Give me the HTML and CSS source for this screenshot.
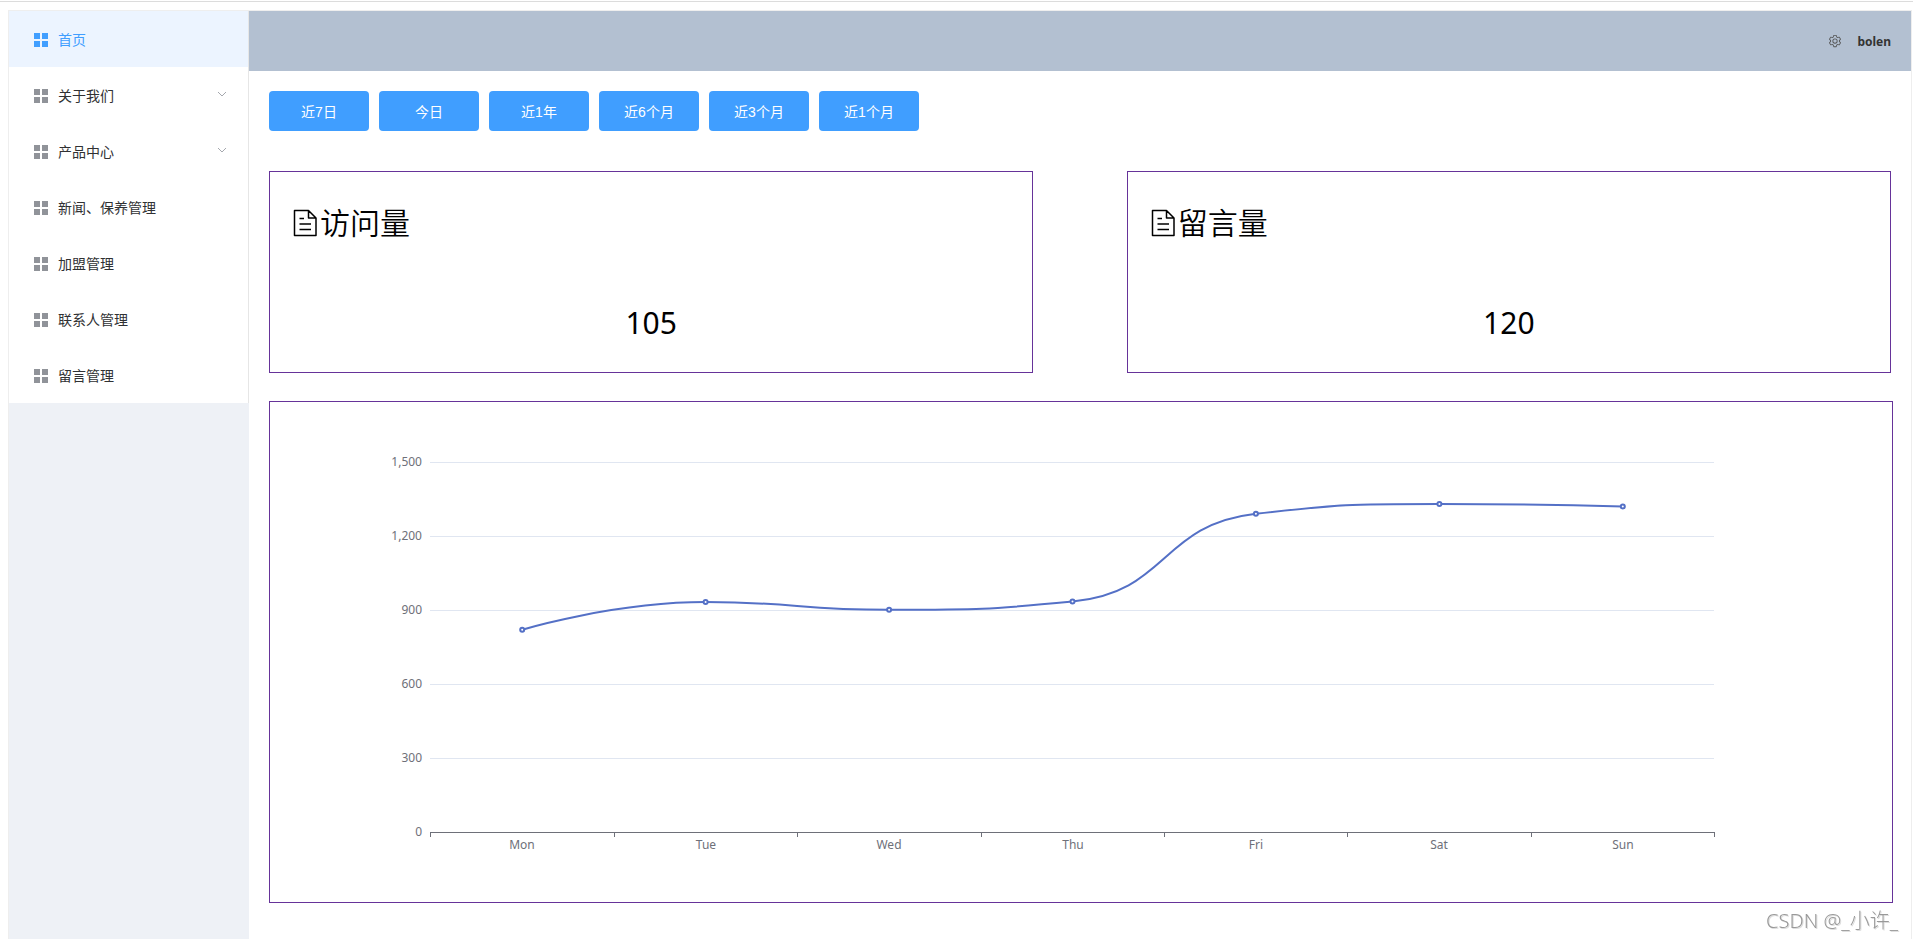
FILE: index.html
```html
<!DOCTYPE html>
<html lang="zh-CN">
<head>
<meta charset="utf-8">
<title>首页</title>
<link rel="stylesheet" href="styles.css">
</head>
<body>
<svg class="sprite" aria-hidden="true">
  <symbol id="icon-menu" viewBox="0 0 14 14"><path d="M0 0h6v6H0zM8 0h6v6H8zM0 8h6v6H0zM8 8h6v6H8z"/></symbol>
  <symbol id="icon-arrow" viewBox="0 0 12 12"><path d="M2 4l4 4 4-4" fill="none" stroke="currentColor"/></symbol>
  <symbol id="icon-document" viewBox="0 0 30 30"><path d="M4.500 2.500H18.500L26 10V27.500H4.500ZM18.500 2.500V10H26M9.500 10.500H14M9.500 16H21M9.500 21.500H21" fill="none" stroke="currentColor" stroke-width="1.500" stroke-linejoin="round"/></symbol>
  <symbol id="icon-setting" viewBox="0 0 1024 1024"><path d="M600.704 64a32 32 0 0 1 30.464 22.208l35.2 109.376c14.784 7.232 28.928 15.36 42.432 24.512l112.384-24.192a32 32 0 0 1 34.432 15.36L944.32 364.8a32 32 0 0 1-4.032 37.504l-77.12 85.12a357.12 357.12 0 0 1 0 49.024l77.12 85.248a32 32 0 0 1 4.032 37.504l-88.704 153.6a32 32 0 0 1-34.432 15.296L708.8 803.904c-13.44 9.088-27.648 17.28-42.368 24.512l-35.264 109.376A32 32 0 0 1 600.704 960H423.296a32 32 0 0 1-30.464-22.208L357.696 828.48a351.616 351.616 0 0 1-42.56-24.64l-112.32 24.256a32 32 0 0 1-34.432-15.36L79.68 659.2a32 32 0 0 1 4.032-37.504l77.12-85.248a357.12 357.12 0 0 1 0-48.896l-77.12-85.248A32 32 0 0 1 79.68 364.8l88.704-153.6a32 32 0 0 1 34.432-15.296l112.32 24.256c13.568-9.152 27.776-17.408 42.56-24.64l35.2-109.312A32 32 0 0 1 423.232 64H600.64zm-23.424 64H446.72l-36.352 113.088-24.512 11.968a294.113 294.113 0 0 0-34.816 20.096l-22.656 15.36-116.224-25.088-65.28 113.152 79.68 88.192-1.92 27.136a293.12 293.12 0 0 0 0 40.192l1.92 27.136-79.808 88.192 65.344 113.152 116.224-25.024 22.656 15.296a294.113 294.113 0 0 0 34.816 20.096l24.512 11.968L446.72 896h130.688l36.48-113.152 24.448-11.904a288.282 288.282 0 0 0 34.752-20.096l22.592-15.296 116.288 25.024 65.28-113.152-79.744-88.192 1.92-27.136a293.12 293.12 0 0 0 0-40.256l-1.92-27.136 79.808-88.128-65.344-113.152-116.288 24.96-22.592-15.232a287.616 287.616 0 0 0-34.752-20.096l-24.448-11.904L577.344 128zM512 320a192 192 0 1 1 0 384 192 192 0 0 1 0-384zm0 64a128 128 0 1 0 0 256 128 128 0 0 0 0-256z"/></symbol>
</svg>
<div class="top-rule"></div>
<div class="container">
  <aside class="aside">
    <nav class="menu">
      <a class="menu-item active" href="#home"><svg class="menu-icon"><use href="#icon-menu"/></svg><span>首页</span></a>
      <button class="menu-item" type="button"><svg class="menu-icon"><use href="#icon-menu"/></svg><span>关于我们</span><svg class="menu-arrow"><use href="#icon-arrow"/></svg></button>
      <button class="menu-item" type="button"><svg class="menu-icon"><use href="#icon-menu"/></svg><span>产品中心</span><svg class="menu-arrow"><use href="#icon-arrow"/></svg></button>
      <a class="menu-item" href="#news"><svg class="menu-icon"><use href="#icon-menu"/></svg><span>新闻、保养管理</span></a>
      <a class="menu-item" href="#join"><svg class="menu-icon"><use href="#icon-menu"/></svg><span>加盟管理</span></a>
      <a class="menu-item" href="#contacts"><svg class="menu-icon"><use href="#icon-menu"/></svg><span>联系人管理</span></a>
      <a class="menu-item" href="#messages"><svg class="menu-icon"><use href="#icon-menu"/></svg><span>留言管理</span></a>
    </nav>
  </aside>
  <div class="content">
    <header class="header">
      <button class="setting" type="button" aria-label="设置"><svg class="setting-icon"><use href="#icon-setting"/></svg></button>
      <span class="user">bolen</span>
    </header>
    <main class="main">
      <div class="ranges">
        <button class="range" type="button">近7日</button>
        <button class="range" type="button">今日</button>
        <button class="range" type="button">近1年</button>
        <button class="range" type="button">近6个月</button>
        <button class="range" type="button">近3个月</button>
        <button class="range" type="button">近1个月</button>
      </div>
      <div class="cards">
        <section class="card">
          <div class="card-title"><svg class="card-icon"><use href="#icon-document"/></svg><span>访问量</span></div>
          <div class="card-value">105</div>
        </section>
        <section class="card">
          <div class="card-title"><svg class="card-icon"><use href="#icon-document"/></svg><span>留言量</span></div>
          <div class="card-value">120</div>
        </section>
      </div>
      <section class="chart-box">
        <svg class="chart" viewBox="0 0 1622 500" role="img" aria-label="Mon - Sun">
          <path class="grid-line" d="M160 60.5H1444M160 134.5H1444M160 208.5H1444M160 282.5H1444M160 356.5H1444"/>
          <path class="axis-line" d="M160 430.5H1445M160.500 430v5M344.500 430v5M527.500 430v5M711.500 430v5M894.500 430v5M1077.500 430v5M1261.500 430v5M1444.500 430v5"/>
          <g class="label label-y">
            <text x="152" y="64">1,500</text>
            <text x="152" y="138">1,200</text>
            <text x="152" y="212">900</text>
            <text x="152" y="286">600</text>
            <text x="152" y="360">300</text>
            <text x="152" y="434">0</text>
          </g>
          <g class="label label-x">
            <text x="252" y="447">Mon</text>
            <text x="436" y="447">Tue</text>
            <text x="619" y="447">Wed</text>
            <text x="803" y="447">Thu</text>
            <text x="986" y="447">Fri</text>
            <text x="1169" y="447">Sat</text>
            <text x="1353" y="447">Sun</text>
          </g>
          <path class="series" d="M252.200 227.700C252.200 227.700 343.500 200.100 435.600 200.100C526.800 200.100 527.400 207.800 619.100 207.800C710.800 207.800 715.500 207.800 802.500 199.600C898.900 190.500 889.500 122.800 985.900 111.800C1073 101.900 1077.700 101.900 1169.400 101.900C1261.100 101.900 1352.800 104.400 1352.800 104.400"/>
          <g class="points">
            <circle cx="252.200" cy="227.700" r="2"/>
            <circle cx="435.600" cy="200.100" r="2"/>
            <circle cx="619.100" cy="207.800" r="2"/>
            <circle cx="802.500" cy="199.600" r="2"/>
            <circle cx="985.900" cy="111.800" r="2"/>
            <circle cx="1169.400" cy="101.900" r="2"/>
            <circle cx="1352.800" cy="104.400" r="2"/>
          </g>
        </svg>
      </section>
    </main>
  </div>
</div>
<div class="watermark">CSDN @_小许_</div>
</body>
</html>
```

FILE: styles.css
```css
* {
  box-sizing: border-box;
}

body {
  margin: 0;
  min-height: 100vh;
  display: flex;
  flex-direction: column;
  background: #fff;
  color: #303133;
  font-family: "Noto Sans", "Noto Sans CJK SC", sans-serif;
  font-size: 14px;
}

svg {
  display: block;
  fill: currentColor;
}

.sprite {
  display: none;
}

.top-rule {
  height: 2px;
  border-bottom: 1px solid #dcdcdc;
}

.container {
  flex: 1;
  display: flex;
  margin: 8px 1px 0 8px;
  border: 1px solid #eee;
  border-bottom: 0;
}

.aside {
  flex: 0 0 240px;
  background: #eef1f6;
}

.menu {
  display: flex;
  flex-direction: column;
  background: #fff;
  border-right: 1px solid #e6e6e6;
}

.menu-item {
  display: flex;
  align-items: center;
  gap: 10px;
  height: 56px;
  padding: 2px 20px 0 25px;
  border: 0;
  background: none;
  color: #303133;
  font: inherit;
  line-height: 20px;
  text-decoration: none;
  cursor: pointer;
}

.menu-item.active {
  background: #ecf4ff;
  color: #409eff;
}

.menu-icon {
  width: 14px;
  height: 14px;
  color: #909399;
}

.active .menu-icon {
  color: #409eff;
}

.menu-arrow {
  width: 12px;
  height: 12px;
  margin: 0 0 4px auto;
  color: #a5a8ae;
}

.content {
  flex: 1;
  min-width: 0;
}

.header {
  display: flex;
  align-items: center;
  justify-content: flex-end;
  gap: 15px;
  height: 60px;
  padding: 0 20px;
  background: #b3c0d1;
  color: #333;
}

.setting {
  padding: 0;
  border: 0;
  background: none;
  color: #555;
  cursor: pointer;
}

.setting-icon {
  width: 14px;
  height: 14px;
}

.user {
  font-size: 12px;
  font-weight: 700;
}

.main {
  padding: 20px;
}

.ranges {
  display: flex;
  gap: 10px;
}

.range {
  width: 100px;
  height: 40px;
  padding: 0;
  border: 0;
  border-radius: 4px;
  background: #409eff;
  color: #fff;
  font-family: "Liberation Sans", "Noto Sans CJK SC", sans-serif;
  font-size: 14px;
  cursor: pointer;
}

.cards {
  display: flex;
  justify-content: space-between;
  margin-top: 40px;
}

.card {
  display: flex;
  flex-direction: column;
  gap: 60px;
  width: calc(47% + 2px);
  padding: 31px 20px 29px;
  border: 1px solid #639;
  color: #000;
  font-size: 30px;
  line-height: 40px;
}

.card-title {
  display: flex;
  align-items: center;
  font-weight: 350;
}

.card-icon {
  width: 30px;
  height: 30px;
}

.card-value {
  text-align: center;
}

.chart-box {
  margin: 28px -2px 0 0;
  border: 1px solid #639;
}

.chart {
  width: 100%;
  height: auto;
}

.grid-line {
  stroke: #e0e6f1;
}

.axis-line {
  stroke: #6e7079;
}

.label {
  fill: #6e7079;
  font-size: 12px;
}

.label-y {
  text-anchor: end;
}

.label-x {
  text-anchor: middle;
}

.series {
  fill: none;
  stroke: #5470c6;
  stroke-width: 2;
}

.points {
  fill: #fff;
  stroke: #5470c6;
  stroke-width: 2;
}

.watermark {
  position: fixed;
  right: 15px;
  bottom: 3px;
  color: #999;
  font-size: 20px;
  font-weight: 300;
  line-height: 30px;
  text-shadow: 1px 1px 0 #ddd;
}
```
